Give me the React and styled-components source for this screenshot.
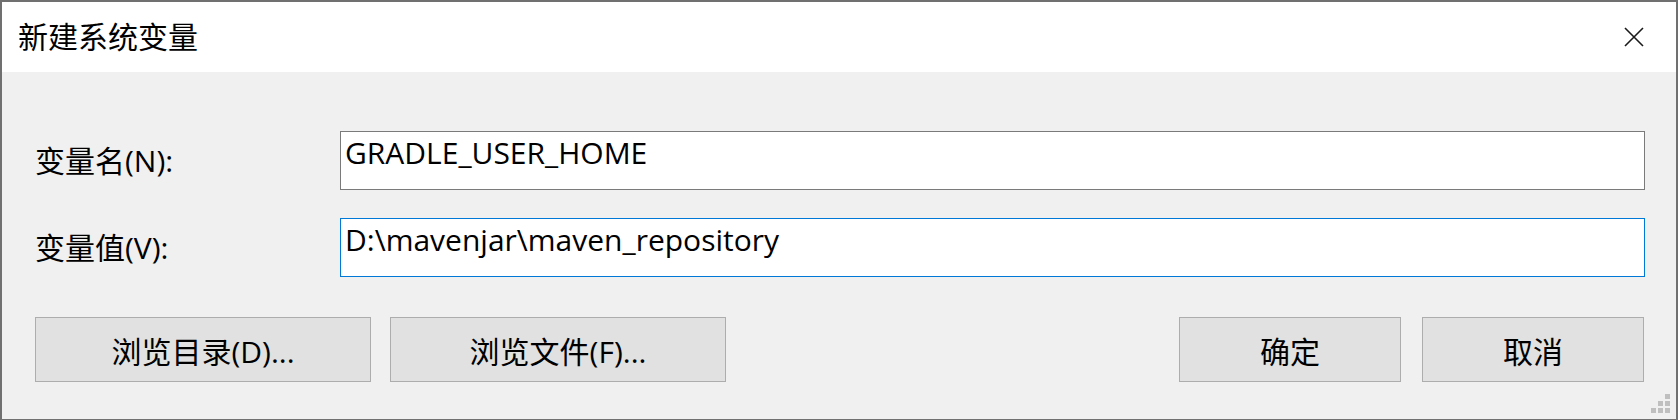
import styled, { createGlobalStyle } from "styled-components";

const GlobalStyle = createGlobalStyle`
	html, body {
		margin: 0;
		padding: 0;
		background: #f0f0f0;
	}
	* {
		box-sizing: border-box;
	}
`;

const FONT = `"Open Sans", "Noto Sans CJK SC", sans-serif`;

const Window = styled.div`
	width: 1678px;
	height: 420px;
	border: 2px solid #707070;
	border-bottom-width: 1px;
	display: flex;
	flex-direction: column;
	font-family: ${FONT};
	font-size: 30px;
	color: #000;
	background: #f0f0f0;
`;

const TitleBar = styled.div`
	height: 70px;
	flex: none;
	background: #ffffff;
	display: flex;
	align-items: center;
	justify-content: space-between;
	padding: 0 32px 0 16px;
`;

const Title = styled.span`
	font-size: 30px;
	line-height: 1;
`;

const CloseIcon = () => (
	<svg width="20" height="20" viewBox="0 0 20 20">
		<path d="M1 1 L19 19 M19 1 L1 19" stroke="#1a1a1a" strokeWidth="1.6" fill="none" />
	</svg>
);

const Body = styled.div`
	flex: 1;
	position: relative;
	padding: 59px 32px 0 33px;
	display: flex;
	flex-direction: column;
`;

const Fields = styled.div`
	display: grid;
	grid-template-columns: 305px 1fr;
	row-gap: 28px;
	align-items: center;
	margin-right: -1px;
`;

const Label = styled.label`
	line-height: 1;
`;

const Edit = styled.div`
	height: 59px;
	background: #ffffff;
	border: 1px solid ${(p) => (p.focused ? "#0078d7" : "#7a7a7a")};
	padding: 0 4px;
	line-height: 42px;
	white-space: nowrap;
`;

const Buttons = styled.div`
	margin-top: 40px;
	display: flex;
	align-items: center;
`;

const Group = styled.div`
	display: flex;
	gap: ${(p) => p.gap}px;
	margin-left: ${(p) => (p.right ? "auto" : "0")};
`;

const Button = styled.button`
	width: ${(p) => p.w}px;
	height: 65px;
	background: #e1e1e1;
	border: 1px solid #adadad;
	font-family: ${FONT};
	font-size: 30px;
	color: #000;
	padding: 0;
	display: flex;
	align-items: center;
	justify-content: center;
`;

const Grip = styled.div`
	position: absolute;
	right: 6px;
	bottom: 6px;
	display: grid;
	grid-template-columns: repeat(3, 5px);
	grid-template-rows: repeat(3, 5px);
	gap: 2px;
`;

const Dot = styled.span`
	background: ${(p) => (p.on ? "#bfbfbf" : "transparent")};
`;

const gripDots = [0, 0, 1, 0, 1, 1, 1, 1, 1];

const App = () => {
	return (
		<>
			<GlobalStyle />
			<Window>
				<TitleBar>
					<Title>新建系统变量</Title>
					<CloseIcon />
				</TitleBar>
				<Body>
					<Fields>
						<Label>变量名(N):</Label>
						<Edit>GRADLE_USER_HOME</Edit>
						<Label>变量值(V):</Label>
						<Edit focused>D:\mavenjar\maven_repository</Edit>
					</Fields>
					<Buttons>
						<Group gap={19}>
							<Button w={336}>浏览目录(D)...</Button>
							<Button w={336}>浏览文件(F)...</Button>
						</Group>
						<Group gap={21} right>
							<Button w={222}>确定</Button>
							<Button w={222}>取消</Button>
						</Group>
					</Buttons>
					<Grip>
						{gripDots.map((on, i) => (
							<Dot key={i} on={on} />
						))}
					</Grip>
				</Body>
			</Window>
		</>
	);
};

export default App;
